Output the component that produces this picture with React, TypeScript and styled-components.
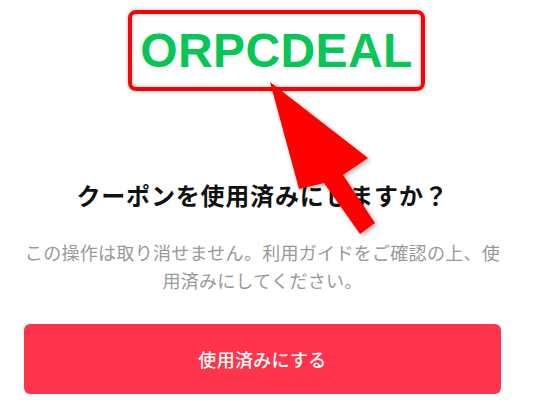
import styled, { createGlobalStyle } from 'styled-components'

const GlobalStyle = createGlobalStyle`
  html, body {
    margin: 0;
    padding: 0;
    background: #fff;
  }
  body {
    font-family: "Noto Sans CJK JP", "Noto Sans", sans-serif;
  }
`

const Page = styled.div`
  position: relative;
  width: 553px;
  height: 406px;
  overflow: hidden;
  background: #fff;
`

const CodeRow = styled.div`
  display: flex;
  justify-content: center;
  padding-top: 10px;
`

const CodeBox = styled.div`
  box-sizing: border-box;
  width: 297px;
  height: 81px;
  border: 4px solid #ff0000;
  border-radius: 8px;
  display: flex;
  align-items: center;
  justify-content: center;
  box-shadow: 0 0 4px rgba(0, 0, 0, 0.25), inset 0 0 4px rgba(0, 0, 0, 0.25);
`

const Code = styled.span`
  font-family: "Liberation Sans", Arial, sans-serif;
  font-weight: 700;
  font-size: 48px;
  line-height: 1;
  color: #06c755;
  letter-spacing: 0.4px;
`

const Dialog = styled.div`
  width: 477px;
  margin-left: 24px;
  padding-top: 87px;
  display: flex;
  flex-direction: column;
  align-items: stretch;
`

const Title = styled.h2`
  margin: 0;
  font-size: 24px;
  line-height: 34px;
  font-weight: 700;
  color: #111;
  text-align: center;
  letter-spacing: 0.8px;
`

const Note = styled.p`
  margin: 26px -2px 0;
  font-size: 18px;
  line-height: 28px;
  color: #999;
  text-align: center;
  letter-spacing: 0.3px;
`

const ConfirmButton = styled.button`
  margin-top: 30px;
  height: 70px;
  border: none;
  border-radius: 6px;
  background: #ff334b;
  color: #fff;
  font-family: inherit;
  font-size: 18px;
  font-weight: 500;
  letter-spacing: 0.3px;
  cursor: pointer;
`

const Arrow = styled.svg`
  position: absolute;
  left: 0;
  top: 0;
  pointer-events: none;
  filter: drop-shadow(2px 2px 2px rgba(0, 0, 0, 0.3));
`

export default function App() {
  return (
    <>
      <GlobalStyle />
      <Page>
        <CodeRow>
          <CodeBox>
            <Code>ORPCDEAL</Code>
          </CodeBox>
        </CodeRow>
        <Dialog>
          <Title>クーポンを使用済みにしますか？</Title>
          <Note>この操作は取り消せません。利用ガイドをご確認の上、使用済みにしてください。</Note>
          <ConfirmButton>使用済みにする</ConfirmButton>
        </Dialog>
        <Arrow width="553" height="406" viewBox="0 0 553 406">
          <polygon
            points="270,82 368,158 343,175 375,223 360,234 324,183 299,189"
            fill="#ff0000"
          />
        </Arrow>
      </Page>
    </>
  )
}
